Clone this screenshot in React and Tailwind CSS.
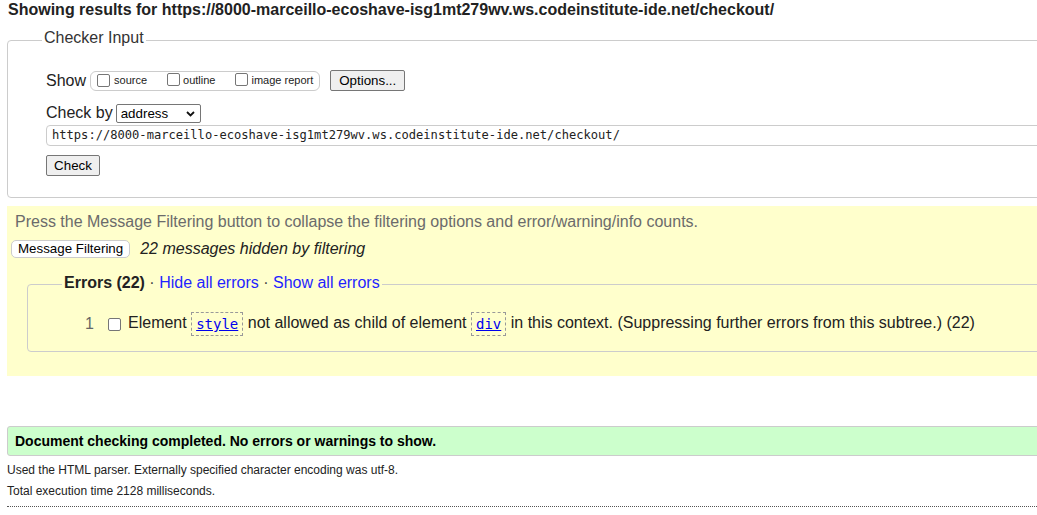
import React from "react";

function Box() {
  return (
    <span className="inline-block w-[13px] h-[13px] border border-[#767676] rounded-[2px] bg-white shrink-0" />
  );
}

function Chevron() {
  return (
    <svg width="9" height="6" viewBox="0 0 9 6" className="shrink-0">
      <polyline points="1,1 4.5,4.5 8,1" fill="none" stroke="#111" strokeWidth="1.8" />
    </svg>
  );
}

function Code({ children }) {
  return (
    <span className="inline-flex items-center h-[24px] px-[4px] border border-dashed border-[#999] align-middle">
      <span className="font-['DejaVu_Sans_Mono',monospace] text-[14px] leading-[16px] text-[#0000ee] underline">
        {children}
      </span>
    </span>
  );
}

export default function App() {
  return (
    <div className="w-[1037px] h-[515px] overflow-hidden bg-white text-[#222] font-['Liberation_Sans',Arial,sans-serif]">
      <h2 className="pl-[8px] pt-[1px] text-[16px] leading-[18px] font-bold whitespace-nowrap">
        Showing results for https://8000-marceillo-ecoshave-isg1mt279wv.ws.codeinstitute-ide.net/checkout/
      </h2>

      <fieldset className="mt-[10px] ml-[7px] -mr-[100px] border border-[#ccc] rounded-[4px] pl-[38px] pt-[18px] pb-[21px]">
        <legend className="-ml-[4px] px-[2px] pb-[4px] text-[16px] leading-[18px] text-[#333]">Checker Input</legend>

        <div className="mt-[1px] flex items-center h-[21px]">
          <span className="text-[16px] leading-[18px]">Show</span>
          <span className="ml-[4px] flex items-center h-[20px] border border-[#ccc] rounded-[6px] pl-[6px] pr-[6px] text-[11px] leading-[13px]">
            <Box />
            <span className="ml-[4px]">source</span>
            <span className="ml-[20px]"><Box /></span>
            <span className="ml-[3px]">outline</span>
            <span className="ml-[20px]"><Box /></span>
            <span className="ml-[3px]">image report</span>
          </span>
          <span className="ml-[10px] flex items-center justify-center w-[75px] h-[21px] bg-[#efefef] border border-[#767676] rounded-[2px] text-[13.33px] text-black">
            Options...
          </span>
        </div>

        <div className="mt-[13px] flex items-center h-[19px]">
          <span className="text-[16px] leading-[16px] mb-[2px]">Check by</span>
          <span className="ml-[3px] flex items-center justify-between w-[85px] h-[19px] border border-[#767676] rounded-[2px] bg-white pl-[4px] pr-[5px] text-[13.33px] text-black">
            address
            <Chevron />
          </span>
        </div>

        <div className="mt-[2px] flex items-center h-[21px] border border-[#ccc] rounded-[4px] pl-[5px] font-['DejaVu_Sans_Mono',monospace] text-[12.1px] whitespace-nowrap">
          https://8000-marceillo-ecoshave-isg1mt279wv.ws.codeinstitute-ide.net/checkout/
        </div>

        <div className="mt-[9px] flex">
          <span className="flex items-center justify-center w-[54px] h-[21px] bg-[#efefef] border border-[#767676] rounded-[2px] text-[13.33px] text-black">
            Check
          </span>
        </div>
      </fieldset>

      <div className="mt-[8px] ml-[7px] -mr-[100px] bg-[#ffffcc] pt-[7px] pb-[24px]">
        <p className="pl-[8px] text-[16px] leading-[18px] text-[#6b6b6b] whitespace-nowrap">
          Press the Message Filtering button to collapse the filtering options and error/warning/info counts.
        </p>
        <div className="mt-[9px] ml-[4px] flex items-center h-[18px]">
          <span className="flex items-center h-[18px] px-[6px] bg-white border border-[#ccc] rounded-[5px] text-[13.33px] text-black">
            Message Filtering
          </span>
          <span className="ml-[10px] italic text-[16px] leading-[18px]">22 messages hidden by filtering</span>
        </div>

        <fieldset className="mt-[16px] ml-[20px] border border-[#ccc] rounded-[4px] pl-[36px] pt-[17px] pb-[15px]">
          <legend className="-ml-[2px] px-[2px] pb-[3px] text-[16px] leading-[18px] whitespace-nowrap">
            <span className="font-bold">Errors (22)</span>
            <span className="text-[#444]"> · </span>
            <span className="text-[#1f1fff]">Hide all errors</span>
            <span className="text-[#444]"> · </span>
            <span className="text-[#1f1fff]">Show all errors</span>
          </legend>
          <div className="flex items-center h-[24px] text-[16px] leading-[18px] whitespace-nowrap">
            <span className="w-[30px] text-right text-[#666]">1</span>
            <span className="ml-[14px] flex"><Box /></span>
            <span className="ml-[7px]">
              Element <Code>style</Code> not allowed as child of element <Code>div</Code> in this context. (Suppressing further errors from this subtree.) (22)
            </span>
          </div>
        </fieldset>
      </div>

      <div className="mt-[50px] ml-[7px] -mr-[100px] bg-[#ccffcc] border border-[#ccc] rounded-[3px] pl-[7px] pt-[6px] pb-[6px]">
        <p className="text-[14px] leading-[16px] font-bold text-black">
          Document checking completed. No errors or warnings to show.
        </p>
      </div>

      <p className="mt-[7px] ml-[7px] text-[12px] leading-[14px]">
        Used the HTML parser. Externally specified character encoding was utf-8.
      </p>
      <p className="mt-[7px] ml-[7px] text-[12px] leading-[14px]">Total execution time 2128 milliseconds.</p>
      <div className="mt-[8px] ml-[7px] -mr-[100px] border-t border-dotted border-[#555]" />
    </div>
  );
}
